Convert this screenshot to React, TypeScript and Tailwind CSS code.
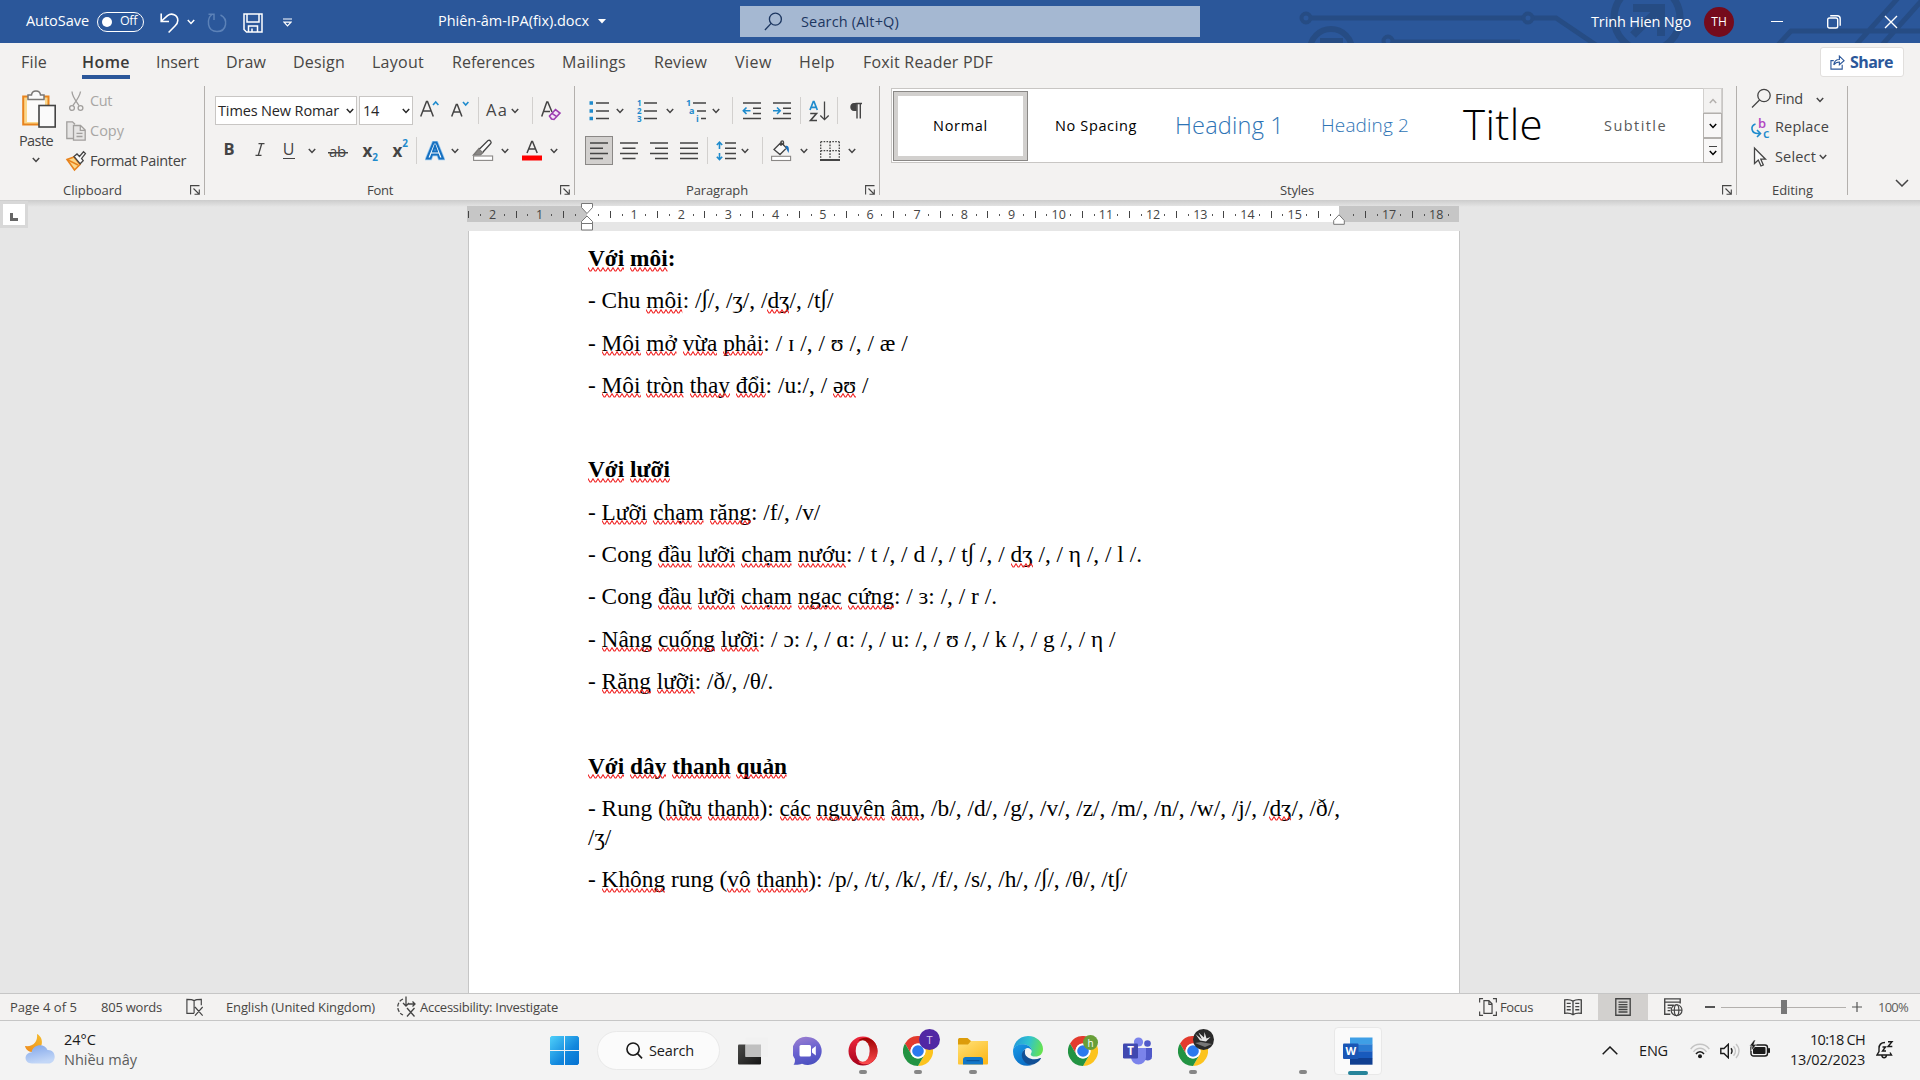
import React, { useLayoutEffect, useRef } from "react";

type Kids = { children?: React.ReactNode; className?: string };

/* Text tracked so that its run is exactly `w` pixels wide. */
function Fit({ w, className = "", children }: { w: number; className?: string; children: string }) {
  const ref = useRef<HTMLSpanElement>(null);
  useLayoutEffect(() => {
    const el = ref.current;
    if (!el) return;
    el.style.letterSpacing = "0px";
    const natural = el.getBoundingClientRect().width;
    el.style.letterSpacing = `${(w - natural) / children.length}px`;
  }, [w, children]);
  return (
    <span ref={ref} className={`inline-block w-max shrink-0 whitespace-nowrap ${className}`}>
      {children}
    </span>
  );
}

function Icon({ children, className = "" }: Kids) {
  return (
    <svg viewBox="0 0 20 20" fill="none" stroke="#444" strokeWidth="1.3" className={`h-5 w-5 shrink-0 overflow-visible ${className}`}>
      {children}
    </svg>
  );
}

function Chev({ className = "" }: { className?: string }) {
  return (
    <svg viewBox="0 0 8 6" fill="none" stroke="currentColor" strokeWidth="1.5" className={`h-1.5 w-2 shrink-0 ${className}`}>
      <path d="M0.8 1 L4 4.4 L7.2 1" />
    </svg>
  );
}

const Sep = ({ className = "" }: { className?: string }) => <div className={`h-[27px] w-px shrink-0 bg-[#d2d0ce] ${className}`} />;

function Launcher({ className = "" }: { className?: string }) {
  return (
    <svg viewBox="0 0 10 10" fill="none" stroke="#444" strokeWidth="1.1" className={`h-2.5 w-2.5 shrink-0 ${className}`}>
      <path d="M0.6 9.5 V0.6 H9.5 M3.5 3.5 L9 9 M9.3 4.5 V9.3 H4.5" />
    </svg>
  );
}

function TitleBar() {
  return (
    <header className="relative flex h-[43px] items-center overflow-hidden bg-[#2b579a] text-[14.5px] leading-none text-white">
      <svg viewBox="1280 0 640 43" className="absolute right-0 top-0 h-[43px] w-[640px]" fill="none" stroke="#264c84" strokeWidth="5">
        <circle cx="1306" cy="18" r="4.5" strokeWidth="4" />
        <path d="M1311 18 H1523 M1533 18 H1556 L1596 45" />
        <circle cx="1528" cy="18" r="4.5" strokeWidth="4" />
        <circle cx="1331" cy="50" r="21" strokeWidth="6" />
        <path d="M1320 41 H1340 V48" strokeWidth="6" />
        <circle cx="1388" cy="41" r="4.5" strokeWidth="4" />
        <path d="M1393 42 H1520" />
        <circle cx="1647" cy="18" r="33" strokeWidth="7" />
        <path d="M1633 35 L1660 8 M1633 8 H1661 V36" strokeWidth="8" />
        <path d="M1778 45 L1791 31 H1920 M1856 45 L1898 -2 M1882 45 L1924 -2" />
      </svg>
      <Fit w={63} className="ml-[26px]">AutoSave</Fit>
      <div className="ml-2 flex h-5 w-[47px] shrink-0 items-center rounded-full border border-white text-[12.5px]">
        <div className="ml-1 h-2.5 w-2.5 rounded-full bg-white" />
        <Fit w={17} className="ml-2">Off</Fit>
      </div>
      <Icon className="ml-4 text-white">
        <path d="M1.2 1.5 V9.5 H9 M1.5 9 L7.5 3.6 C11.5 0.5 17.8 2.8 17.8 8.4 C17.8 11 16.6 12.4 15 14 L8.6 20.5" stroke="#fff" strokeWidth="1.6" />
      </Icon>
      <Chev className="ml-[7px]" />
      <Icon className="ml-3">
        <path d="M5.5 2 C-1 7 0 19.5 10 19.5 C20 19.5 21.5 7 13.5 3 M1.5 2.2 H7 V8" stroke="#5c82b8" strokeWidth="1.5" />
      </Icon>
      <Icon className="ml-4 mt-0.5">
        <path d="M1 1 H19 V19 H3.5 L1 16.5 Z M4 1 V9 H16 V1 M5.5 19 V13 H14.5 V19 M9 19 V15.5" stroke="#fff" strokeWidth="1.5" />
      </Icon>
      <svg viewBox="0 0 9 9" fill="none" stroke="#fff" strokeWidth="1.2" className="ml-5 mt-px h-[9px] w-[9px] shrink-0">
        <path d="M0 1 H9 M1 4.2 L4.5 7.8 L8 4.2 Z" />
      </svg>
      <Fit w={151} className="ml-[146px]">Phiên-âm-IPA(fix).docx</Fit>
      <svg viewBox="0 0 8 5" className="ml-[9px] h-[5px] w-2 shrink-0 fill-white"><path d="M0 0 H8 L4 4.6 Z" /></svg>
      <div className="ml-[134px] flex h-[31px] w-[460px] shrink-0 items-center bg-[#a5b8d2] text-[#1c3660]">
        <svg viewBox="0 0 20 20" fill="none" stroke="#1c3660" strokeWidth="1.4" className="ml-6 h-[19px] w-[19px]">
          <circle cx="12" cy="7.5" r="6.3" /><path d="M7.5 12 L1 19" />
        </svg>
        <Fit w={98} className="ml-[18px] pt-px">Search (Alt+Q)</Fit>
      </div>
      <Fit w={100} className="relative ml-[391px] pt-px">Trinh Hien Ngo</Fit>
      <div className="relative ml-[13px] flex h-[30px] w-[30px] shrink-0 items-center justify-center rounded-full bg-[#750b1c] text-[12px]">TH</div>
      <div className="relative ml-[37px] h-[1.5px] w-3 shrink-0 bg-white" />
      <svg viewBox="0 0 14 14" fill="none" stroke="#fff" strokeWidth="1.4" className="relative ml-11 h-3.5 w-3.5 shrink-0">
        <rect x="0.7" y="3" width="10" height="10" rx="1.8" /><path d="M3.2 0.8 H10.2 C12 0.8 13.2 2 13.2 3.8 V10.8" />
      </svg>
      <svg viewBox="0 0 14 14" fill="none" stroke="#fff" strokeWidth="1.4" className="relative ml-[43px] h-3.5 w-3.5 shrink-0">
        <path d="M1 1 L13 13 M13 1 L1 13" />
      </svg>
    </header>
  );
}

function Tab({ w, active, className = "", children }: { w: number; active?: boolean; className?: string; children: string }) {
  return (
    <div className={`flex h-9 shrink-0 items-center border-b-4 pt-1.5 ${active ? "border-[#2b579a] font-semibold text-[#3b3a39]" : "border-transparent"} ${className}`}>
      <Fit w={w}>{children}</Fit>
    </div>
  );
}

function Tabs() {
  return (
    <nav className="flex h-[43px] items-start text-[16px] leading-none text-[#484644]">
      <Tab w={26} className="ml-[21px]">File</Tab>
      <Tab w={48} active className="ml-[35px]">Home</Tab>
      <Tab w={43} className="ml-[26px]">Insert</Tab>
      <Tab w={40} className="ml-[27px]">Draw</Tab>
      <Tab w={52} className="ml-[27px]">Design</Tab>
      <Tab w={52} className="ml-[27px]">Layout</Tab>
      <Tab w={83} className="ml-7">References</Tab>
      <Tab w={64} className="ml-[27px]">Mailings</Tab>
      <Tab w={53} className="ml-7">Review</Tab>
      <Tab w={37} className="ml-7">View</Tab>
      <Tab w={36} className="ml-[27px]">Help</Tab>
      <Tab w={130} className="ml-[28px]">Foxit Reader PDF</Tab>
      <button className="ml-auto mr-4 mt-1 flex h-[30px] w-[84px] items-center rounded-[3px] border border-[#e1dfdd] bg-white font-bold text-[#2b579a]">
        <svg viewBox="0 0 16 16" fill="none" stroke="#2b579a" strokeWidth="1.2" className="ml-[9px] h-[15px] w-[15px]">
          <path d="M4 6 H1 V15 H13 V10.5 M4 10.5 C4.5 6.5 7 4.8 10 4.8 V1.2 L15 6 L10 10.4 V7.5 C7.5 7.5 5.5 8.3 4 10.5 Z" />
        </svg>
        <Fit w={43} className="ml-[5px]">Share</Fit>
      </button>
    </nav>
  );
}

function Group({ className = "", children }: Kids) {
  return <section className={`flex h-[109px] shrink-0 flex-col border-r border-[#b3b0ad] ${className}`}>{children}</section>;
}

function Clipboard() {
  return (
    <Group className="w-[205px]">
      <div className="flex h-24 shrink-0">
        <div className="ml-[18px] flex w-9 flex-col items-start">
          <svg viewBox="0 0 34 38" fill="none" className="ml-1 mt-1 h-[38px] w-[34px]">
            <path d="M1.2 6.5 H26.5 V34.5 H1.2 Z" fill="#fbd88c" stroke="#e8831d" strokeWidth="2" />
            <path d="M5 9 H23 V32 H5 Z" fill="#fcfbfa" />
            <path d="M6 9.5 V5 H9.5 C10 -0.5 18 -0.5 18.5 5 H22 V9.5 Z" fill="#fafafa" stroke="#797775" strokeWidth="1.5" />
            <rect x="17" y="15.5" width="16.2" height="21.5" fill="#fafafa" stroke="#444" strokeWidth="1.6" />
          </svg>
          <Fit w={34} className="ml-px mt-1.5 text-[14.5px] leading-none">Paste</Fit>
          <Chev className="ml-3.5 mt-2" />
        </div>
        <div className="ml-3 flex flex-col text-[14.5px] leading-none">
          <div className="flex h-[30px] items-center text-[#a8a6a4]">
            <Icon>
              <path d="M6 0.5 C6 5 9 9 13 14.5 M14.5 0.5 C14 5 11 9 7 14.5" stroke="#a19f9d" />
              <circle cx="6" cy="17" r="2.4" stroke="#a19f9d" /><circle cx="14.5" cy="17" r="2.4" stroke="#a19f9d" />
            </Icon>
            <Fit w={22} className="ml-1">Cut</Fit>
          </div>
          <div className="flex h-[30px] items-center text-[#a8a6a4]">
            <Icon>
              <path d="M7 17.5 H0.8 V0.8 H6.5 L9 3.3 M7.5 4.5 H14.5 L19.2 9 V19.2 H7.5 Z M14.3 4.5 V9.3 H19 M10.5 12.3 H16.5 M10.5 15.5 H16.5" stroke="#a19f9d" fill="#e6e5e4" />
            </Icon>
            <Fit w={34} className="ml-1">Copy</Fit>
          </div>
          <div className="flex h-[30px] items-center">
            <Icon>
              <path d="M1 8.5 L8 6 L14 13.5 L8.5 19 Z" fill="#fbd88c" stroke="#e8831d" strokeWidth="1.6" />
              <path d="M1 8.5 L12 14 " stroke="#e8831d" strokeWidth="1.4" />
              <path d="M8 5.5 L11 3 L13.5 5.5 L17.5 0.8 L19.4 2.6 L15.6 7.4 L17.2 9.6 L14.2 12.8 Z" fill="#fafafa" />
            </Icon>
            <Fit w={96} className="ml-1">Format Painter</Fit>
          </div>
        </div>
      </div>
      <div className="flex h-4 shrink-0 items-center text-[13px] leading-none">
        <Fit w={59} className="ml-[63px]">Clipboard</Fit>
        <Launcher className="ml-[68px]" />
      </div>
    </Group>
  );
}

function FontGroup() {
  return (
    <Group className="w-[370px]">
      <div className="flex h-24 shrink-0 flex-col gap-[11px] pt-2.5">
        <div className="flex h-[29px] items-center">
          <div className="ml-2.5 flex h-[29px] w-[142px] shrink-0 items-center border border-[#c8c6c4] bg-white text-[14.5px] text-[#262626]">
            <Fit w={121} className="ml-0.5">Times New Romar</Fit>
            <Chev className="ml-[7px]" />
          </div>
          <div className="ml-0.5 flex h-[29px] w-[54px] shrink-0 items-center border border-[#c8c6c4] bg-white text-[14.5px] text-[#262626]">
            <Fit w={16} className="ml-[3px]">14</Fit>
            <Chev className="ml-[23px]" />
          </div>
          <Icon className="-mt-0.5 ml-[7px]">
            <path d="M0.7 16.5 L6.5 1.5 H7.5 L13.3 16.5 M3 11 H11" strokeWidth="1.5" />
            <path d="M13 5 L15.7 2 L18.4 5" stroke="#1e8bcd" strokeWidth="1.6" />
          </Icon>
          <Icon className="-mt-0.5 ml-[11px]">
            <path d="M0.7 16.5 L5.3 4.5 H6.3 L10.9 16.5 M2.5 12 H9" strokeWidth="1.5" />
            <path d="M12 2 L14.7 5 L17.4 2" stroke="#1e8bcd" strokeWidth="1.6" />
          </Icon>
          <Sep className="ml-[7px]" />
          <Fit w={22} className="ml-[7px] text-[16.5px]">Aa</Fit>
          <Chev className="ml-[3px]" />
          <Sep className="ml-[13px]" />
          <Icon className="ml-2">
            <path d="M0.7 15.5 L5.8 1 H6.8 L11 11 M2.5 10.5 H9" strokeWidth="1.5" />
            <path d="M8.5 15 L14.5 8.5 L19 12 L13 18.5 L10.5 18 Z M11 12.3 L15.7 15.7" fill="#f3e3f6" stroke="#9c3bb0" strokeWidth="1.6" />
          </Icon>
        </div>
        <div className="flex h-[29px] items-center leading-none text-[#444]">
          <Fit w={11} className="-mt-0.5 ml-[18.5px] text-[16.5px] font-bold">B</Fit>
          <svg viewBox="0 0 10 13" fill="none" stroke="#444" strokeWidth="1.3" className="-mt-0.5 ml-5 h-[13px] w-2.5"><path d="M3.5 0.7 H9.5 M0.5 12.3 H6.5 M6.7 0.7 L3.3 12.3" /></svg>
          <span className="ml-[18px] flex h-[17px] w-[12px] justify-center border-b-[1.5px] border-[#444] text-[16px] leading-[14px]">U</span>
          <Chev className="ml-[13px]" />
          <span className="ml-3 mt-0.5 flex w-5 justify-center bg-[linear-gradient(#444,#444)] bg-[length:100%_1.5px] bg-[position:0_60%] bg-no-repeat text-[15px] tracking-tight">ab</span>
          <span className="ml-[15px] flex w-4 items-center text-[17px] font-bold">x<span className="mt-3 text-[10px] text-[#1e8bcd]">2</span></span>
          <span className="ml-[14px] flex w-4 items-center text-[17px] font-bold">x<span className="mb-4 text-[10px] text-[#1e8bcd]">2</span></span>
          <Sep className="ml-[7px]" />
          <svg viewBox="0 0 20 20" fill="none" className="ml-2 h-5 w-5">
            <path d="M2 17.5 L8.5 1.5 H11.5 L18 17.5 H14.5 L13 13.5 H7 L5.5 17.5 Z M8 10.5 H12 L10 5 Z" fill="#fff" stroke="#9ccaf0" strokeWidth="3.6" />
            <path d="M2 17.5 L8.5 1.5 H11.5 L18 17.5 H14.5 L13 13.5 H7 L5.5 17.5 Z M8 10.5 H12 L10 5 Z" fill="#fff" stroke="#1670c0" strokeWidth="2" />
          </svg>
          <Chev className="ml-1.5" />
          <Icon className="ml-3.5">
            <path d="M0.5 14 L6 7.5 L10 11.5 L7.5 13.8 Z" fill="#8a8886" stroke="#797775" />
            <path d="M6.5 8 L15 -0.5 C17 -1.5 19 1 17.7 2.5 L10 11" fill="#fafafa" />
            <rect x="0.6" y="15" width="19" height="4.4" fill="#fff" stroke="#8a8886" strokeWidth="1.1" />
          </Icon>
          <Chev className="ml-2" />
          <Icon className="ml-[13px]">
            <path d="M5 12 L9.7 0.5 H10.5 L15.2 12 M7 8 H13.2" strokeWidth="1.5" />
            <rect x="0" y="14.5" width="20" height="5" fill="#f00" stroke="none" />
          </Icon>
          <Chev className="ml-2" />
        </div>
      </div>
      <div className="flex h-4 shrink-0 items-center text-[13px] leading-none">
        <Fit w={26} className="ml-[162px]">Font</Fit>
        <Launcher className="ml-[167px]" />
      </div>
    </Group>
  );
}

function Lines({ d }: { d: string }) {
  return <path d={d} strokeWidth="1.6" />;
}

function Paragraph() {
  return (
    <Group className="w-[305px]">
      <div className="flex h-24 shrink-0 flex-col gap-[11px] pt-2.5">
        <div className="flex h-[29px] items-center">
          <Icon className="ml-3.5">
            <Lines d="M7 2 H20 M7 10 H20 M7 17.5 H20" />
            <path d="M0.5 2 H4 M0.5 10 H4 M0.5 17.5 H4" stroke="#1e8bcd" strokeWidth="3.6" />
          </Icon>
          <Chev className="ml-[7px]" />
          <Icon className="ml-[13px]">
            <Lines d="M7 2 H20 M7 10 H20 M7 17.5 H20" />
            <g fill="#1e8bcd" stroke="none" fontSize="8" fontWeight="700"><text x="0" y="5">1</text><text x="0" y="13">2</text><text x="0" y="20.5">3</text></g>
          </Icon>
          <Chev className="ml-[9px]" />
          <Icon className="ml-3">
            <Lines d="M7 2 H20 M11 10 H20 M15 17.5 H20" />
            <g fill="#1e8bcd" stroke="none" fontSize="9" fontWeight="700"><text x="0" y="5">1</text><text x="3" y="13">a</text><text x="10" y="21">i</text></g>
          </Icon>
          <Chev className="ml-1.5" />
          <Sep className="ml-3" />
          <Icon className="ml-[9px]">
            <Lines d="M1 2 H19 M11 7.3 H19 M11 12.5 H19 M1 17.5 H19" />
            <path d="M1.5 9.8 H8.5 M4.5 6.5 L1.3 9.8 L4.5 13" stroke="#1e8bcd" strokeWidth="1.6" />
          </Icon>
          <Icon className="ml-2.5">
            <Lines d="M1 2 H19 M11 7.3 H19 M11 12.5 H19 M1 17.5 H19" />
            <path d="M1 9.8 H8 M5 6.5 L8.2 9.8 L5 13" stroke="#1e8bcd" strokeWidth="1.6" />
          </Icon>
          <Sep className="ml-2" />
          <Icon className="ml-2">
            <path d="M1 9 L4.3 0.5 H5 L8.3 9 M2.3 6.3 H7" stroke="#1e8bcd" strokeWidth="1.7" />
            <path d="M1.2 12.5 H7.5 L1.5 19.5 H8" strokeWidth="1.6" />
            <path d="M15.5 0.5 V18.5 M11.3 14.5 L15.5 18.7 L19.7 14.5" />
          </Icon>
          <Sep className="ml-2" />
          <Icon className="ml-2.5">
            <path d="M7.5 2.5 H14 M9 2.5 V17.5 M12.3 2.5 V17.5" strokeWidth="1.4" />
            <path d="M8.7 2 H6 C1 2 1 10 6 10 H8.7 Z" fill="#444" stroke="none" />
          </Icon>
        </div>
        <div className="flex h-[29px] items-center">
          <div className="ml-2.5 flex h-[29px] w-7 items-center justify-center border border-[#8a8886] bg-[#d2d0ce]">
            <Icon><Lines d="M1 2 H19 M1 7.3 H14 M1 12.5 H19 M1 17.5 H14" /></Icon>
          </div>
          <Icon className="ml-1.5"><Lines d="M1 2 H19 M3.5 7.3 H16.5 M1 12.5 H19 M3.5 17.5 H16.5" /></Icon>
          <Icon className="ml-2.5"><Lines d="M1 2 H19 M6 7.3 H19 M1 12.5 H19 M6 17.5 H19" /></Icon>
          <Icon className="ml-2.5"><Lines d="M1 2 H19 M1 7.3 H19 M1 12.5 H19 M1 17.5 H19" /></Icon>
          <Sep className="ml-2" />
          <Icon className="ml-2">
            <Lines d="M9 2 H20 M9 7.3 H20 M9 12.5 H20 M9 17.5 H20" />
            <path d="M3.5 1.5 V8 M0.8 4 L3.5 1.2 L6.2 4 M3.5 12 V18.5 M0.8 15.8 L3.5 18.6 L6.2 15.8" stroke="#1e8bcd" strokeWidth="1.6" />
          </Icon>
          <Chev className="ml-[5px]" />
          <Sep className="ml-[13px]" />
          <Icon className="ml-2">
            <path d="M3 8.5 L10 1.5 L15.5 7 L9 13.5 Z M10 5 V1 C10 -0.5 12.5 -0.5 12.5 1 V4" fill="#fafafa" />
            <path d="M14.5 5 C17.5 4 18.5 7 17.5 12 L15.5 8 Z" fill="#1670c0" stroke="none" />
            <rect x="0.6" y="15.3" width="19" height="4.2" fill="#fff" stroke="#8a8886" strokeWidth="1.1" />
          </Icon>
          <Chev className="ml-[9px]" />
          <Icon className="ml-3">
            <path d="M0.7 0.7 H19.3 M0.7 0.7 V18 M19.3 0.7 V18 M10 0.7 V18 M0.7 9.7 H19.3" strokeDasharray="1.6 1.3" />
            <path d="M0 19 H20" strokeWidth="2" />
          </Icon>
          <Chev className="ml-2" />
        </div>
      </div>
      <div className="flex h-4 shrink-0 items-center text-[13px] leading-none">
        <Fit w={62} className="ml-[111px]">Paragraph</Fit>
        <Launcher className="ml-[117px]" />
      </div>
    </Group>
  );
}

function Styles() {
  return (
    <Group className="w-[857px]">
      <div className="flex h-24 shrink-0 items-start">
        <div className="ml-[11px] mt-0.5 flex h-[75px] w-[832px] items-center border border-[#c8c6c4] bg-white text-[14.5px] leading-none text-black">
          <div className="ml-px flex h-[70px] w-[135px] shrink-0 items-center justify-center border border-[#8a8886] bg-[#d2d0ce] p-1">
            <div className="flex h-full w-full items-center justify-center bg-white pt-px"><Fit w={55}>Normal</Fit></div>
          </div>
          <Fit w={82} className="ml-[27px] pt-px">No Spacing</Fit>
          <Fit w={109} className="ml-[38px] text-[23.5px] font-light text-[#2e74b5]">Heading 1</Fit>
          <Fit w={88} className="ml-[37px] text-[19px] font-light text-[#2e74b5]">Heading 2</Fit>
          <Fit w={80} className="-mt-1 ml-[54px] text-[42px] font-light">Title</Fit>
          <Fit w={63} className="ml-[61px] pt-px text-[#5a5a5a]">Subtitle</Fit>
          <div className="ml-auto flex h-[75px] w-[19px] flex-col">
            <div className="flex h-[25px] items-center justify-center border border-[#d2d0ce] bg-[#f3f2f1] text-[#b3b0ad]"><Chev className="rotate-180" /></div>
            <div className="flex h-[25px] items-center justify-center border border-[#b3b0ad] bg-[#f8f7f7]"><Chev /></div>
            <div className="flex h-[25px] flex-col items-center justify-center gap-[3px] border border-[#b3b0ad] bg-[#f8f7f7]"><div className="h-px w-2 bg-[#444]" /><Chev /></div>
          </div>
        </div>
      </div>
      <div className="flex h-4 shrink-0 items-center text-[13px] leading-none">
        <Fit w={34} className="ml-[400px]">Styles</Fit>
        <Launcher className="ml-[408px]" />
      </div>
    </Group>
  );
}

function Editing() {
  return (
    <Group className="w-[111px]">
      <div className="flex h-24 shrink-0 flex-col text-[14.5px] leading-none">
        <div className="flex h-[27px] items-center">
          <Icon className="ml-3.5 -mt-1"><circle cx="13" cy="7.5" r="6.2" /><path d="M8.5 12 L1 19.5" /></Icon>
          <Fit w={28} className="ml-1">Find</Fit><Chev className="ml-[13px]" />
        </div>
        <div className="flex h-[29px] items-center">
          <Icon className="ml-3.5">
            <g stroke="none" fontSize="13" fontWeight="600"><text x="7" y="9.5" fill="#b146c2">b</text><text x="12" y="20" fill="#1e8bcd">c</text></g>
            <path d="M4.5 6 C-1 8 0 15.5 7 15.5 H9 M6 12 L9.5 15.5 L6 19" stroke="#1e8bcd" strokeWidth="1.6" />
          </Icon>
          <Fit w={54} className="ml-1">Replace</Fit>
        </div>
        <div className="flex h-[30px] items-center">
          <Icon className="ml-3.5"><path d="M3.5 1 V16.5 L7.3 13 L10 19 L12.3 18 L9.8 12.2 H14.5 Z" fill="#fafafa" /></Icon>
          <Fit w={41} className="ml-1">Select</Fit><Chev className="ml-[3px]" />
        </div>
      </div>
      <div className="flex h-4 shrink-0 items-center text-[13px] leading-none">
        <Fit w={41} className="ml-[35px]">Editing</Fit>
      </div>
    </Group>
  );
}

function Ribbon() {
  return (
    <div className="h-[157px] bg-[#f3f2f1] text-[#444]">
      <Tabs />
      <div className="flex">
        <Clipboard />
        <FontGroup />
        <Paragraph />
        <Styles />
        <Editing />
        <svg viewBox="0 0 14 8" fill="none" stroke="#444" strokeWidth="1.5" className="ml-[47px] mt-[93px] h-2 w-3.5"><path d="M1 1 L7 7 L13 1" /></svg>
      </div>
    </div>
  );
}

const quarters = Array.from({ length: 84 }, (_, i) => i - 10);

function Ruler() {
  return (
    <div className="flex h-[31px] items-start">
      <div className="mt-px flex h-[27px] w-7 items-center justify-start bg-[#d8d8d8] pl-[3px]">
        <div className="flex h-[21px] w-[22px] items-center justify-center bg-white">
          <div className="mt-1 h-2 w-2 border-b-[3px] border-l-[3px] border-[#666]" />
        </div>
      </div>
      <div className="relative ml-[439px] mt-1.5 flex h-4 w-[992px]">
        <div className="w-[120px] bg-[#c6c6c6]" />
        <div className="w-[752px] bg-white" />
        <div className="w-[120px] bg-[#c6c6c6]" />
        <div className="absolute inset-y-0 -left-[4px] flex pt-[1.5px] text-[12.5px] leading-none text-[#444]">
          {quarters.map((q) => (
            <div key={q} className="flex w-[11.81px] shrink-0 items-center justify-center">
              {q === 0 || q === 64 ? null : q % 4 === 0 ? <span>{Math.abs(q / 4)}</span> : q % 2 === 0 ? <div className="h-[7px] w-px bg-[#444]" /> : <div className="h-0.5 w-px bg-[#555]" />}
            </div>
          ))}
        </div>
        <svg viewBox="0 0 12 28" fill="#fff" stroke="#777" strokeWidth="1" className="absolute -top-[3px] left-[114px] h-7 w-3">
          <path d="M0.5 0.5 H11.5 V4.5 L6 10.5 L0.5 4.5 Z M6 13 L11.5 18.5 V20.5 H0.5 V18.5 Z M0.5 20.5 H11.5 V27 H0.5 Z" />
        </svg>
        <svg viewBox="0 0 12 11" fill="#fff" stroke="#777" strokeWidth="1" className="absolute left-[866px] top-2 h-[11px] w-3">
          <path d="M6 0.8 L11.3 6.5 V10.3 H0.7 V6.5 Z" />
        </svg>
      </div>
    </div>
  );
}

/* The integral sign sits a little above the baseline of the text. */
function Plain({ text }: { text: string }) {
  return (
    <>
      {text.split(/(∫)/).map((s, i) => (s === "∫" ? <span key={i} className="relative -top-[2.5px]">∫</span> : s))}
    </>
  );
}

/* A word carrying the red zigzag of the spell checker. */
function Misspelt({ children, id }: { children: string; id: string }) {
  return (
    <span className="relative inline-block">
      {children}
      <svg className="absolute inset-x-0 top-[22.5px] h-[5px] w-full">
        <defs>
          <pattern id={id} width="5" height="5" patternUnits="userSpaceOnUse">
            <path d="M-0.5 0 L2 4 L3 4 L5.5 0" fill="none" stroke="#f02020" strokeWidth="1.1" />
          </pattern>
        </defs>
        <rect width="100%" height="5" fill={`url(#${id})`} />
      </svg>
    </span>
  );
}

const paragraphs: { lines: string[]; bold?: boolean }[] = [
  { lines: ["_Với_ _môi_:"], bold: true },
  { lines: ["- Chu _môi_: /∫/, /ʒ/, /_dʒ_/, /t∫/"] },
  { lines: ["- _Môi_ _mở_ _vừa_ _phải_: / ɪ /, / ʊ /, / æ /"] },
  { lines: ["- _Môi_ _tròn_ _thay_ _đổi_: /u:/, / _əʊ_ /"] },
  { lines: [""] },
  { lines: ["_Với_ _lưỡi_"], bold: true },
  { lines: ["- _Lưỡi_ _chạm_ _răng_: /f/, /v/"] },
  { lines: ["- Cong _đầu_ _lưỡi_ _chạm_ _nướu_: / t /, / d /, / t∫ /, / _dʒ_ /, / η /, / l /."] },
  { lines: ["- Cong _đầu_ _lưỡi_ _chạm_ _ngạc_ _cứng_: / ɜ: /, / r /."] },
  { lines: ["- _Nâng_ _cuống_ _lưỡi_: / ɔ: /, / ɑ: /, / u: /, / ʊ /, / k /, / g /, / η /"] },
  { lines: ["- _Răng_ _lưỡi_: /ð/, /θ/."] },
  { lines: [""] },
  { lines: ["_Với_ _dây_ _thanh_ _quản_"], bold: true },
  { lines: ["- Rung (_hữu_ _thanh_): _các_ _nguyên_ _âm_, /b/, /d/, /g/, /v/, /z/, /m/, /n/, /w/, /j/, /_dʒ_/, /ð/,", "/ʒ/"] },
  { lines: ["- _Không_ rung (_vô_ _thanh_): /p/, /t/, /k/, /f/, /s/, /h/, /∫/, /θ/, /t∫/"] },
];

function Document() {
  return (
    <main className="ml-[468px] h-[762px] w-[992px] overflow-hidden border-x border-[#c6c6c6] bg-white pl-[119px] pt-[13px] font-['Liberation_Serif','DejaVu_Serif',serif] text-[23.33px] leading-[29px] text-black">
      {paragraphs.map((p, i) => (
        <div key={i} className={`mb-[13.3px] ${p.bold ? "font-bold" : ""}`}>
          {p.lines.map((line, k) => (
            <p key={k} className="h-[29px] whitespace-pre">
              {line.split("_").map((part, j) => (j % 2 ? <Misspelt key={j} id={`w${i}-${j}`}>{part}</Misspelt> : <Plain key={j} text={part} />))}
            </p>
          ))}
        </div>
      ))}
    </main>
  );
}

function StatusBar() {
  return (
    <footer className="flex h-7 items-center border-y border-[#c6c6c6] bg-[#f3f2f1] text-[13px] leading-none text-[#484644]">
      <Fit w={67} className="ml-2.5">Page 4 of 5</Fit>
      <Fit w={61} className="ml-6">805 words</Fit>
      <Icon className="ml-6 !h-[18px] !w-[18px]">
        <path d="M9 17 V3 C7 1.5 4 1.5 1 1.5 V17 H9 M9 3 C11 1.5 14 1.5 17 1.5 V8 M10 10 L18.5 19.5 M18.5 10 L10 19.5" />
      </Icon>
      <Fit w={149} className="ml-[22px]">English (United Kingdom)</Fit>
      <Icon className="ml-[22px]">
        <path d="M6 2 C-1 5 -1 15 6 18" strokeDasharray="4 1.6" />
        <path d="M9 -0.5 V9 M6 6 L9 9 L12 6 M11 7 H18 M15.5 4.5 L18 7 L15.5 9.5 M10 11 L17.5 19.5 M17.5 11 L10 19.5" />
      </Icon>
      <Fit w={138} className="ml-[3px]">Accessibility: Investigate</Fit>
      <Icon className="ml-[921px] !h-[18px] !w-[18px]">
        <path d="M0.7 5 V0.7 H4.5 M15.5 0.7 H19.3 V5 M0.7 15 V19.3 H4.5 M15.5 19.3 H19.3 V15 M5.5 3 H11 L14.5 6.5 V17 H5.5 Z M11 3 V7 H14.5" />
      </Icon>
      <Fit w={33} className="ml-[3px]">Focus</Fit>
      <Icon className="ml-[31px] !h-[18px] !w-[18px]">
        <path d="M10 3.5 C7 1.5 4 1.5 0.8 2 V17 C4 16.5 7 16.5 10 18.5 C13 16.5 16 16.5 19.2 17 V2 C16 1.5 13 1.5 10 3.5 V18 M3 6 H7.5 M3 9.5 H7.5 M3 13 H7.5 M12.5 6 H17 M12.5 9.5 H17 M12.5 13 H17" strokeWidth="1.5" />
      </Icon>
      <div className="ml-4 flex h-[26px] w-[50px] shrink-0 items-center justify-center bg-[#d2d0ce]">
        <Icon className="!h-[18px] !w-[18px]">
          <path d="M2 0.8 H18 V19.2 H2 Z M5 4.5 H15 M5 7.3 H15 M5 10 H15 M5 12.8 H15 M5 15.5 H15" strokeWidth="1.5" />
        </Icon>
      </div>
      <Icon className="ml-4 !h-[18px] !w-[18px]">
        <path d="M7 18 H0.8 V1 H18 V6 M0.8 4.5 H18 M4 8 H11 M4 11 H8 M4 14 H7" strokeWidth="1.5" />
        <circle cx="14" cy="13.5" r="6" /><ellipse cx="14" cy="13.5" rx="2.5" ry="6" /><path d="M8 13.5 H20" />
      </Icon>
      <div className="ml-[23px] h-[1.5px] w-2.5 shrink-0 bg-[#555]" />
      <div className="ml-1.5 flex h-3.5 w-[125px] shrink-0 items-center bg-[linear-gradient(#b3b0ad,#b3b0ad)] bg-[length:100%_1px] bg-center bg-no-repeat">
        <div className="ml-[60px] h-3.5 w-1.5 bg-[#777]" />
      </div>
      <svg viewBox="0 0 10 10" stroke="#555" strokeWidth="1.2" className="ml-1.5 h-2.5 w-2.5 shrink-0"><path d="M0 5 H10 M5 0 V10" /></svg>
      <Fit w={30} className="ml-4 text-[#605e5c]">100%</Fit>
    </footer>
  );
}

function Chrome() {
  return (
    <svg viewBox="0 0 48 48" className="h-[30px] w-[30px]">
      <path d="M3.2 12 A24 24 0 0 1 44.8 12 H24 A12 12 0 0 0 13.6 30 Z" fill="#e33b2e" />
      <path d="M44.8 12 A24 24 0 0 1 24 48 L34.4 30 A12 12 0 0 0 24 12 Z" fill="#fcc31e" />
      <path d="M24 48 A24 24 0 0 1 3.2 12 L13.6 30 A12 12 0 0 0 34.4 30 Z" fill="#229342" />
      <circle cx="24" cy="24" r="12" fill="#fff" /><circle cx="24" cy="24" r="9.3" fill="#2a79ee" />
    </svg>
  );
}

function TaskButton({ running, className = "", children }: Kids & { running?: boolean }) {
  return (
    <div className={`relative flex h-[59px] w-[30px] shrink-0 items-center justify-center ${className}`}>
      {children}
      {running && <div className="absolute bottom-1.5 h-1 w-2 rounded-full bg-[#868686]" />}
    </div>
  );
}

function Taskbar() {
  return (
    <div className="flex h-[59px] items-center bg-[#f3f3f3] text-[14.5px] leading-none text-[#1a1a1a]">
      <svg viewBox="0 0 30 30" className="-mt-1 ml-[25px] h-[30px] w-[30px] shrink-0">
        <defs>
          <linearGradient id="cloud" x1="0" y1="0" x2="0.3" y2="1"><stop offset="0" stopColor="#7fa5ea" /><stop offset="1" stopColor="#c3d7f7" /></linearGradient>
          <linearGradient id="moon" x1="1" y1="0" x2="0" y2="1"><stop offset="0" stopColor="#f5bd2c" /><stop offset="1" stopColor="#ee8a1d" /></linearGradient>
        </defs>
        <path d="M12 0 C20 4 18 17 8 18 C4 18 1 16 0 12 C8 13 13 8 12 0 Z" fill="url(#moon)" />
        <path d="M7 29.5 C-2 29 -1 18.5 6.5 18.5 C8 9.5 20 9 22.5 16 C32 15.5 32 29.5 23 29.5 Z" fill="url(#cloud)" />
      </svg>
      <div className="-mt-px ml-[9px] flex w-[80px] flex-col items-start gap-[5.5px]">
        <Fit w={32}>24°C</Fit>
        <Fit w={73} className="text-[#5c5c5c]">Nhiều mây</Fit>
      </div>
      <svg viewBox="0 0 29 29" className="ml-[406px] h-[29px] w-[29px] shrink-0">
        <defs><linearGradient id="win" x1="0" y1="0" x2="1" y2="1"><stop offset="0" stopColor="#4fd0fa" /><stop offset="0.6" stopColor="#1287dd" /><stop offset="1" stopColor="#0571d0" /></linearGradient></defs>
        <path d="M1.5 0 H14 V14 H0 V1.5 Z M15 0 H27.5 L29 1.5 V14 H15 Z M0 15 H14 V29 H1.5 L0 27.5 Z M15 15 H29 V27.5 L27.5 29 H15 Z" fill="url(#win)" />
      </svg>
      <div className="ml-[18px] flex h-[39px] w-[123px] shrink-0 items-center rounded-full border border-[#e9e9e9] bg-[#fbfbfb]">
        <svg viewBox="0 0 18 18" fill="none" stroke="#1a1a1a" strokeWidth="1.7" className="ml-7 h-[17px] w-[17px]"><circle cx="7.5" cy="7.5" r="6.5" /><path d="M12 12 L17 17.3" /></svg>
        <Fit w={45} className="ml-1.5 pt-px">Search</Fit>
      </div>
      <TaskButton className="ml-[18px]">
        <svg viewBox="0 0 30 30" className="h-[30px] w-[30px]">
          <defs><linearGradient id="tv" x1="0" y1="0" x2="1" y2="1"><stop offset="0" stopColor="#4a4a48" /><stop offset="1" stopColor="#151515" /></linearGradient>
          <linearGradient id="tv2" x1="0" y1="1" x2="1" y2="0"><stop offset="0" stopColor="#a5a5a5" /><stop offset="0.5" stopColor="#e4e4e4" /><stop offset="1" stopColor="#fff" /></linearGradient></defs>
          <rect x="0" y="8.5" width="23" height="20" rx="1" fill="url(#tv)" /><rect x="7.5" y="1.5" width="22.5" height="19.5" rx="1" fill="#f1f1f1" />
          <rect x="7.5" y="8.5" width="15.5" height="12.5" fill="#c0c0c0" />
        </svg>
      </TaskButton>
      <TaskButton className="ml-[25px]">
        <svg viewBox="0 0 30 30" className="h-[30px] w-[30px]">
          <defs><linearGradient id="chat" x1="0.2" y1="0" x2="0.5" y2="1"><stop offset="0" stopColor="#9b7fd0" /><stop offset="0.5" stopColor="#6a62d0" /><stop offset="1" stopColor="#4c51c0" /></linearGradient></defs>
          <path d="M15 1 A14 14 0 1 1 9 27.8 C6 29 3 29 0.5 28.7 C2 27 2 25 1.9 23 A14 14 0 0 1 15 1 Z" fill="url(#chat)" />
          <rect x="6.5" y="9" width="11.5" height="11.5" rx="1.5" fill="#fff" /><path d="M19 13 L22.8 10 V19.6 L19 16.6 Z" fill="#fff" />
        </svg>
      </TaskButton>
      <TaskButton running className="ml-[25px]">
        <svg viewBox="0 0 30 30" className="h-[30px] w-[30px]">
          <defs><linearGradient id="op" x1="0" y1="0" x2="0" y2="1"><stop offset="0" stopColor="#f0293d" /><stop offset="1" stopColor="#a5001a" /></linearGradient>
          <linearGradient id="op2" x1="0" y1="0" x2="0" y2="1"><stop offset="0" stopColor="#9c0000" /><stop offset="1" stopColor="#ff4d4f" /></linearGradient></defs>
          <circle cx="15" cy="15" r="14.5" fill="url(#op)" />
          <path d="M10 4.5 C17 -2 29.5 3 29.5 15 C29.5 27 17 32 10 25.5 C26 26 26 4 10 4.5 Z" fill="url(#op2)" />
          <ellipse cx="14.7" cy="15" rx="7" ry="10.8" fill="#f3f3f3" />
        </svg>
      </TaskButton>
      <TaskButton running className="ml-[25px]">
        <Chrome />
        <div className="absolute left-4 top-2 flex h-[21px] w-[21px] items-center justify-center rounded-full bg-[#5128a4] text-[11px] text-[#d9ccf0]">T</div>
      </TaskButton>
      <TaskButton running className="ml-[25px]">
        <svg viewBox="0 0 30 30" className="h-[30px] w-[30px]">
          <defs><linearGradient id="fo" x1="0" y1="0" x2="0.7" y2="1"><stop offset="0" stopColor="#ffe27a" /><stop offset="1" stopColor="#fdb91d" /></linearGradient></defs>
          <path d="M0 3.5 C0 2.5 1 2 2 2 H9.5 L13 5 V9 H0 Z" fill="#dc9c0a" /><path d="M0 8.5 H10 L13 5 H30 V27.5 C30 28 29.5 28.5 29 28.5 H1 C0.5 28.5 0 28 0 27.5 Z" fill="url(#fo)" />
          <path d="M5 28.5 V23.5 C5 22 6 21 7.5 21 H22.5 C24 21 25 22 25 23.5 V28.5 Z" fill="#1277c8" /><path d="M8.5 24.7 H21.5" stroke="#0b4f94" strokeWidth="1" />
        </svg>
      </TaskButton>
      <TaskButton className="ml-[25px]">
        <svg viewBox="0 0 30 30" className="h-[30px] w-[30px]">
          <defs>
            <linearGradient id="e1" x1="0" y1="0.3" x2="1" y2="0.5"><stop offset="0" stopColor="#2298da" /><stop offset="0.5" stopColor="#30c2cf" /><stop offset="1" stopColor="#66e34f" /></linearGradient>
            <linearGradient id="e2" x1="0" y1="0" x2="0.6" y2="1"><stop offset="0" stopColor="#1a9be8" /><stop offset="1" stopColor="#0a6cc4" /></linearGradient>
          </defs>
          <path d="M0.3 13 C1.5 4.5 8 0 15 0 C24 0 30 6.5 30 13 C30 18 26.5 20.5 22.5 20.5 C18.5 20.5 17 19 18 17.5 C20 14.5 18 9 11 8.5 C6 8.2 2 10 0.3 13 Z" fill="url(#e1)" />
          <path d="M0.2 13 C2 9.5 6 8 10.5 8.2 C15 8.5 19 11.5 18.8 15 C18.5 13 16 11.5 14 12 C10 13.5 8.5 18 10.5 22.5 C12.5 27 17 29 20 28.7 C9 33 -1.5 24.5 0.2 13 Z" fill="url(#e2)" />
          <path d="M12.5 13.3 C9 15 8 19 9.5 22.5 C12 28.5 18 30 21.5 28 C24.5 26.7 27 24.5 28 22.3 C28 21.8 27.6 21.8 27.2 22 C20 25.3 12.5 21.5 12 17.5 C11.8 15.5 12 14.3 12.5 13.3 Z" fill="#114f95" />
        </svg>
      </TaskButton>
      <TaskButton className="ml-[25px]">
        <Chrome />
        <div className="absolute left-[15px] top-3.5 flex h-[15px] w-[15px] items-center justify-center rounded-full bg-[#689f38] text-[10px] text-white">h</div>
      </TaskButton>
      <TaskButton className="ml-[25px]">
        <svg viewBox="0 0 30 30" className="h-[30px] w-[30px]">
          <circle cx="24.5" cy="7.5" r="3.3" fill="#5059c9" /><path d="M19 12 H29 V20.5 C29 24.5 25 25 22 24 Z" fill="#5059c9" />
          <circle cx="15.5" cy="6" r="4.6" fill="#7b83eb" /><path d="M8 12 H23 V20.5 C23 31 8 31 8 20.5 Z" fill="#7b83eb" />
          <rect x="0" y="7.5" width="15" height="15" rx="1.3" fill="#4048b0" />
          <text x="7.5" y="19" textAnchor="middle" fill="#fff" fontSize="11.5" fontWeight="700">T</text>
        </svg>
      </TaskButton>
      <TaskButton running className="ml-[25px]">
        <Chrome />
        <div className="absolute left-[15px] top-2 h-[21px] w-[21px] overflow-hidden rounded-full bg-[#2a2a2a]">
          <svg viewBox="0 0 21 21" className="h-full w-full"><path d="M2.5 5 L9 10.5 L5.5 3.5 L11 8.5 L11.5 3 L13.5 9.5 L17.5 8 L13 12.5 L7 11.5 Z" fill="#e8e8e8" /><path d="M2 14 L8 13 L19 15 L12 18 Z" fill="#777" /></svg>
        </div>
      </TaskButton>
      <TaskButton running className="ml-20" />
      <div className="relative ml-[16px] flex h-12 w-12 shrink-0 items-center justify-center rounded-[4px] border border-[#e8e8e8] bg-[#fafafa]">
        <svg viewBox="0 0 30 30" className="h-[30px] w-[30px]">
          <rect x="7" y="1.5" width="22.5" height="7" fill="#3f9fe6" /><rect x="7" y="8.3" width="22.5" height="7" fill="#2b7cd3" /><rect x="7" y="15.2" width="22.5" height="7" fill="#185abd" /><rect x="7" y="22" width="22.5" height="6.7" fill="#103f91" />
          <rect x="0" y="7.5" width="15.5" height="15.5" rx="1" fill="#1a56b5" />
          <text x="7.8" y="19" textAnchor="middle" fill="#fff" fontSize="11" fontWeight="700">W</text>
        </svg>
        <div className="absolute -bottom-px h-1 w-5 rounded-full bg-[#26849a]" />
      </div>
      <svg viewBox="0 0 16 9" fill="none" stroke="#1a1a1a" strokeWidth="1.5" className="ml-[220px] h-[9px] w-4 shrink-0"><path d="M0.7 8.3 L8 1 L15.3 8.3" /></svg>
      <Fit w={29} className="ml-[21px] pt-px">ENG</Fit>
      <svg viewBox="0 0 20 16" fill="none" strokeWidth="1.4" className="ml-[22px] h-4 w-5 shrink-0">
        <path d="M0.7 6 C5.5 -0.3 14.5 -0.3 19.3 6 M3.5 8.8 C7 4 13 4 16.5 8.8" stroke="#c4c4c4" /><path d="M6 11 C8 8 12 8 14 11" stroke="#1a1a1a" /><circle cx="10" cy="13.2" r="2" fill="#1a1a1a" />
      </svg>
      <svg viewBox="0 0 20 16" fill="none" stroke="#1a1a1a" strokeWidth="1.4" className="ml-2.5 h-4 w-5 shrink-0">
        <path d="M0.8 5.5 H4 L8.3 1.3 V14.7 L4 10.5 H0.8 Z M11 5.3 C12.3 7 12.3 9 11 10.7" /><path d="M13.5 3.2 C16 6 16 10 13.5 12.8 M16 1 C20 5 20 11 16 15" stroke="#c4c4c4" />
      </svg>
      <svg viewBox="0 0 20 16" className="-mt-1 ml-2.5 h-4 w-5 shrink-0 overflow-visible">
        <rect x="1" y="4" width="16.5" height="11" rx="2.5" fill="none" stroke="#1a1a1a" strokeWidth="1.4" /><rect x="3" y="6" width="12.5" height="7" rx="1" fill="#1a1a1a" /><rect x="18" y="7" width="2" height="5" rx="0.8" fill="#1a1a1a" />
        <path d="M4 -1 L-0.5 5 H2.2 L1.2 10 L6.5 3.6 H3.8 L5.5 -1 Z" fill="#1a1a1a" stroke="#f3f3f3" strokeWidth="0.6" />
      </svg>
      <div className="-mt-px ml-[20px] flex w-[75px] shrink-0 flex-col items-end gap-[5.5px]">
        <Fit w={55}>10:18 CH</Fit>
        <Fit w={75}>13/02/2023</Fit>
      </div>
      <svg viewBox="0 0 18 18" fill="none" stroke="#1a1a1a" strokeWidth="1.4" className="-mt-0.5 ml-[11px] h-[18px] w-[18px] shrink-0">
        <path d="M9 1.5 C5 1.5 3 4 3 7.5 V10.5 L1 14 H15.5 L14 11.5 M5.8 14.3 C6.2 17.5 10 17.5 10.5 14.3" /><path d="M6.5 6 H9.5 L6.5 10 H10 M12 0.8 H16 L12 5.5 H16.3" />
      </svg>
    </div>
  );
}

export default function App() {
  return (
    <div className="h-[1080px] w-[1920px] overflow-hidden bg-[#e6e6e6] font-['Open_Sans','Noto_Sans',sans-serif]">
      <TitleBar />
      <Ribbon />
      <div className="h-[793px] bg-[linear-gradient(#cccccc,#e6e6e6)] bg-[length:100%_7px] bg-no-repeat">
        <Ruler />
        <Document />
      </div>
      <StatusBar />
      <Taskbar />
    </div>
  );
}
